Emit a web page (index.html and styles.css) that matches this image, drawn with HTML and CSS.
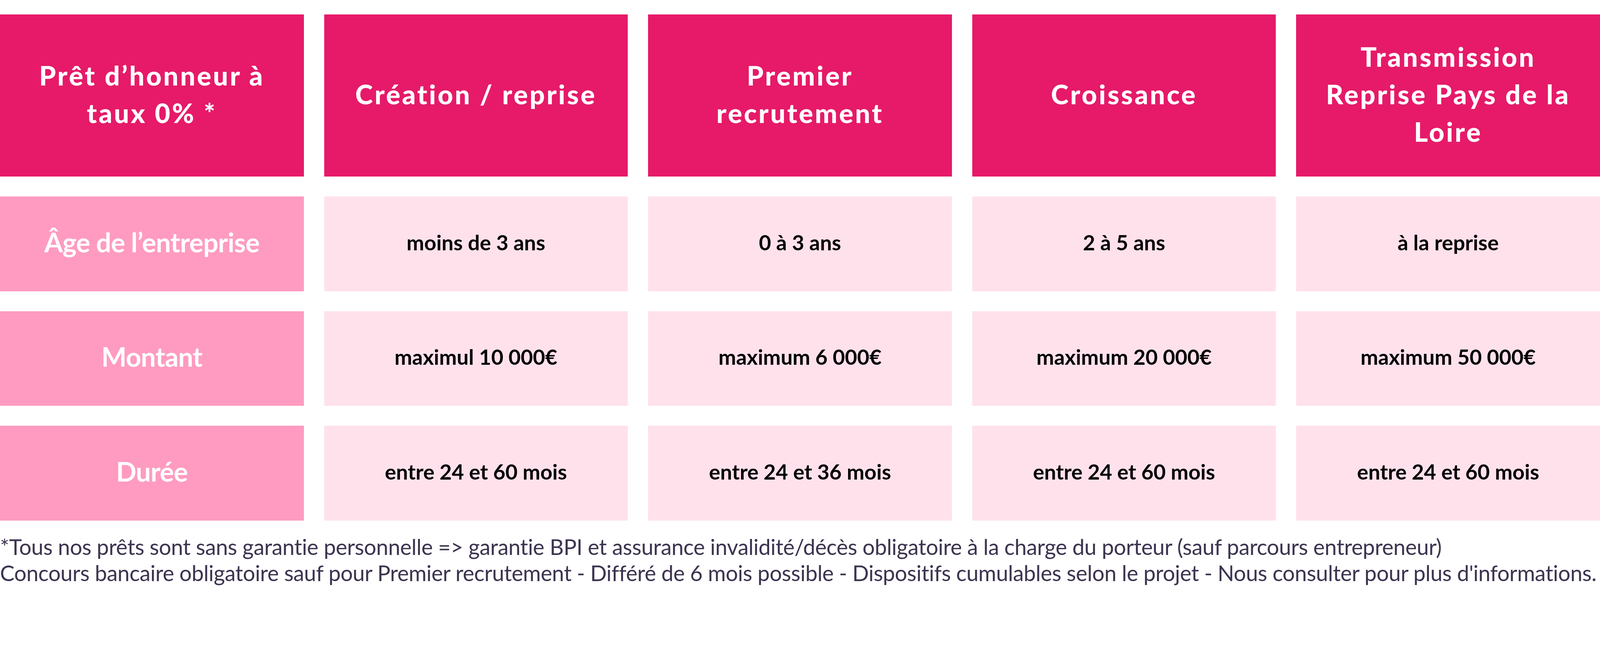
FILE: index.html
```html
<!DOCTYPE html>
<html lang="fr">
<head>
<meta charset="utf-8">
<title>Prêt d'honneur à taux 0%</title>
<link rel="stylesheet" href="styles.css">
</head>
<body>
<main class="page">
  <section class="table">
    <div class="cell head">Prêt d’honneur à<br>taux 0% *</div>
    <div class="cell head">Création / reprise</div>
    <div class="cell head">Premier<br>recrutement</div>
    <div class="cell head">Croissance</div>
    <div class="cell head">Transmission<br>Reprise Pays de la<br>Loire</div>

    <div class="cell label">Âge de l’entreprise</div>
    <div class="cell value">moins de 3 ans</div>
    <div class="cell value">0 à 3 ans</div>
    <div class="cell value">2 à 5 ans</div>
    <div class="cell value">à la reprise</div>

    <div class="cell label">Montant</div>
    <div class="cell value">maximul 10 000€</div>
    <div class="cell value">maximum 6 000€</div>
    <div class="cell value">maximum 20 000€</div>
    <div class="cell value">maximum 50 000€</div>

    <div class="cell label">Durée</div>
    <div class="cell value">entre 24 et 60 mois</div>
    <div class="cell value">entre 24 et 36 mois</div>
    <div class="cell value">entre 24 et 60 mois</div>
    <div class="cell value">entre 24 et 60 mois</div>
  </section>
  <p class="note">*Tous nos prêts sont sans garantie personnelle =&gt; garantie BPI et assurance invalidité/décès obligatoire à la charge du porteur (sauf parcours entrepreneur)<br>Concours bancaire obligatoire sauf pour Premier recrutement - Différé de 6 mois possible - Dispositifs cumulables selon le projet - Nous consulter pour plus d'informations.</p>
</main>
</body>
</html>
```

FILE: styles.css
```css
/* one design unit = 1/4560 of the viewport width */
:root {
  --u: calc(100vw / 4560);
}

html, body {
  margin: 0;
  padding: 0;
  background: #ffffff;
  overflow: hidden;
}

.page {
  width: 100%;
  padding-top: calc(41 * var(--u));
  font-family: Lato, "Open Sans", sans-serif;
}

.table {
  display: grid;
  grid-template-columns: repeat(5, minmax(0, 1fr));
  grid-template-rows: calc(462 * var(--u)) calc(270 * var(--u)) calc(270 * var(--u)) calc(270 * var(--u));
  column-gap: calc(58 * var(--u));
  row-gap: calc(57 * var(--u));
}

.cell {
  display: flex;
  align-items: center;
  justify-content: center;
  text-align: center;
  min-width: 0;
  white-space: nowrap;
  padding-bottom: calc(10 * var(--u));
}

.head {
  background: #e61a69;
  color: #ffffff;
  font-weight: 900;
  font-size: calc(76 * var(--u));
  line-height: calc(107 * var(--u));
  letter-spacing: 0.065em;
  padding-bottom: calc(8 * var(--u));
}

.label {
  background: #ff9bc0;
  color: #ffffff;
  font-weight: 700;
  font-size: calc(76 * var(--u));
  letter-spacing: -0.012em;
}

.value {
  background: #ffe1ec;
  color: #000000;
  font-weight: 700;
  font-size: calc(60 * var(--u));
}

.note {
  margin: calc(38 * var(--u)) 0 0;
  color: #3d3450;
  font-size: calc(62 * var(--u));
  line-height: calc(74 * var(--u));
  font-weight: 400;
  letter-spacing: -0.0075em;
  white-space: nowrap;
}
```
